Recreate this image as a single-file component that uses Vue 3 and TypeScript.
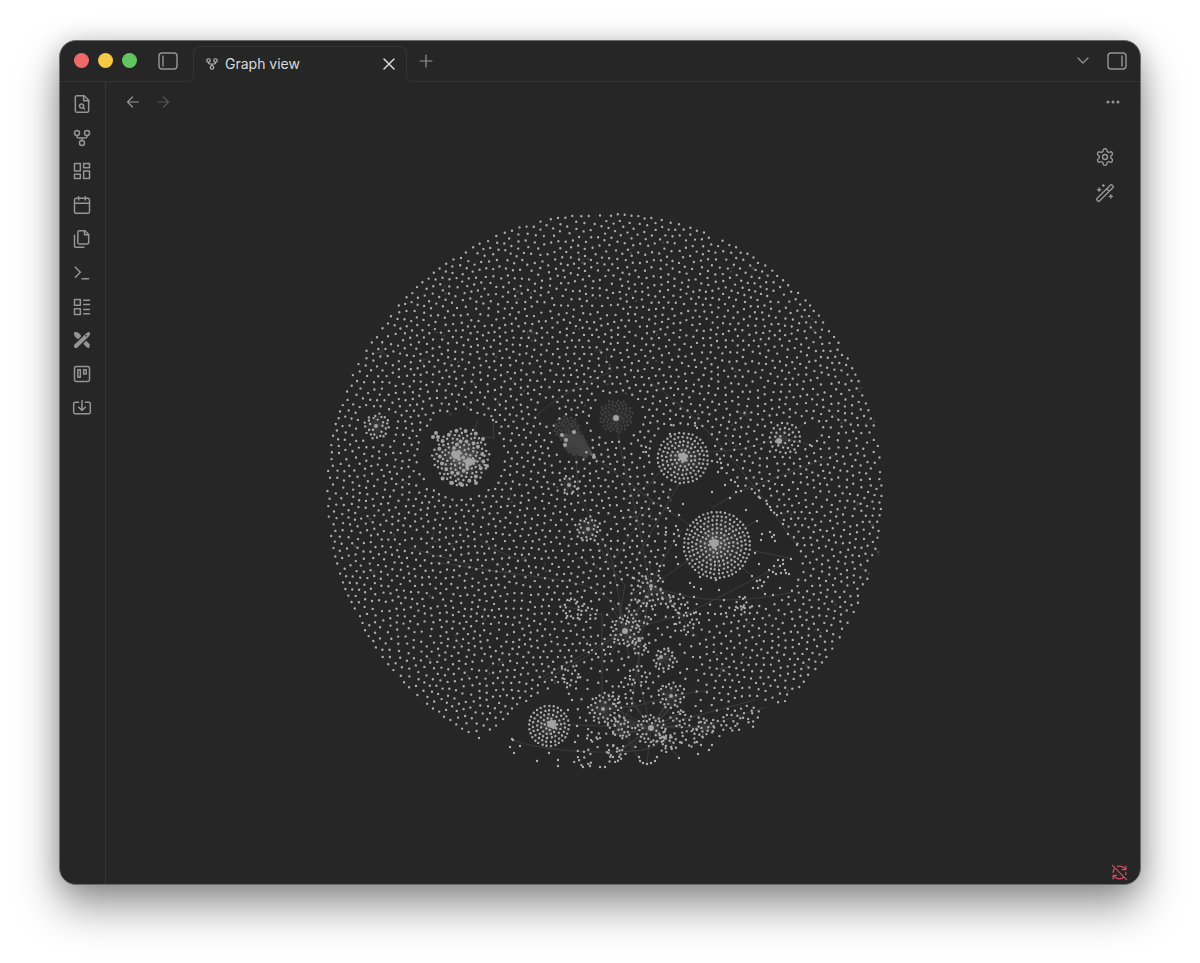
<script setup lang="ts">
type Point = [number, number]

interface Hub {
  x: number
  y: number
  r: number
}

interface Cluster {
  x: number
  y: number
  radius: number
  count: number
}

interface RibbonItem {
  label: string
  paths: string[]
  solid?: boolean
}

const forkIcon = [
  'M15 18a3 3 0 1 1-6 0 3 3 0 0 1 6 0M9 6a3 3 0 1 1-6 0 3 3 0 0 1 6 0M21 6a3 3 0 1 1-6 0 3 3 0 0 1 6 0',
  'M18 9v1a2 2 0 0 1-2 2H8a2 2 0 0 1-2-2V9M12 12v3',
]

const ribbon: RibbonItem[] = [
  {
    label: 'Open quick switcher',
    paths: [
      'M14.5 2H6a2 2 0 0 0-2 2v16a2 2 0 0 0 2 2h12a2 2 0 0 0 2-2V7.500z',
      'M14 2v6h6M14 14.500a2.500 2.500 0 1 1-5 0 2.500 2.500 0 0 1 5 0M13.250 16.250 15 18',
    ],
  },
  { label: 'Open graph view', paths: forkIcon },
  { label: 'Create new canvas', paths: ['M3 3h7v9H3zM14 3h7v5h-7zM14 12h7v9h-7zM3 16h7v5H3z'] },
  {
    label: "Open today's daily note",
    paths: ['M5 4h14a2 2 0 0 1 2 2v14a2 2 0 0 1-2 2H5a2 2 0 0 1-2-2V6a2 2 0 0 1 2-2z', 'M16 2v4M8 2v4M3 10h18'],
  },
  {
    label: 'Insert template',
    paths: [
      'M15.5 2H8.600c-.4 0-.8.2-1.100.5-.3.3-.5.7-.5 1.100v12.800c0 .4.2.8.5 1.100.3.3.7.5 1.100.5h9.800c.4 0 .8-.2 1.100-.5.3-.3.5-.7.5-1.100V6.500z',
      'M3 7.600v12.800c0 .4.2.8.5 1.100.3.3.7.5 1.100.5h9.800M15 2v5h5',
    ],
  },
  { label: 'Open command palette', paths: ['M4 17l6-6-6-6M12 19h8'] },
  { label: 'Open list layout', paths: ['M3 3h7v7H3zM3 14h7v7H3z', 'M14 4h7M14 9h7M14 15h7M14 20h7'] },
  {
    label: 'New drawing',
    solid: true,
    paths: [
      'M3 17.500 16 5c2-2 4-2.500 5.500-2 .5 1.500 0 3.500-2 5.500L6.500 21c-1 1-2.500 1-3.500 0s-1-2.500 0-3.500z',
      'M2.500 2.500C7 2 10 4 11 7.500L7.500 11C4 9.500 2 7 2.500 2.500z',
      'M13.500 16.500 17 13l4.500 4.500-1 4.500-2.500-1z',
    ],
  },
  {
    label: 'Create new board',
    paths: ['M5 3h14a2 2 0 0 1 2 2v14a2 2 0 0 1-2 2H5a2 2 0 0 1-2-2V5a2 2 0 0 1 2-2z', 'M7 7h3v9H7zM14 7h3v5h-3z'],
  },
  {
    label: 'Open importer',
    paths: ['M12 3v12M8 11l4 4 4-4', 'M8 5H4a2 2 0 0 0-2 2v10a2 2 0 0 0 2 2h16a2 2 0 0 0 2-2V7a2 2 0 0 0-2-2h-4'],
  },
]

let seed = 20231
function random(): number {
  seed = (seed + 0x6d2b79f5) | 0
  let t = Math.imul(seed ^ (seed >>> 15), 1 | seed)
  t = (t + Math.imul(t ^ (t >>> 7), 61 | t)) ^ t
  return ((t ^ (t >>> 14)) >>> 0) / 4294967296
}

const centre = { x: 604.5, y: 491, r: 278 }

const roundGaps: [number, number, number, number][] = [
  [461, 455, 44, 45],
  [377, 426, 20, 20],
  [616, 417, 26, 25],
  [571, 438, 19, 24],
  [548, 412, 12, 12],
  [683, 457, 34, 33],
  [784, 437, 20, 19],
  [803, 433, 16, 15],
  [588, 529, 18, 18],
  [569, 486, 8, 8],
  [549, 726, 32, 30],
]

const gapUpper: Point[] = [
  [672, 486], [712, 466], [732, 476], [756, 494], [778, 517], [797, 545], [801, 568],
  [797, 585], [783, 598], [765, 606], [715, 606], [672, 592], [660, 578], [670, 545], [668, 505],
]
const gapLower: Point[] = [
  [480, 733], [500, 726], [517, 706], [535, 696], [552, 686], [552, 664], [582, 652], [592, 640],
  [590, 622], [560, 614], [562, 604], [602, 604], [618, 585], [650, 575], [676, 590], [712, 604],
  [728, 612], [706, 635], [699, 660], [706, 692], [724, 702], [752, 700], [782, 704], [770, 790], [480, 790],
]

function inside(shape: Point[], x: number, y: number): boolean {
  let hit = false
  for (let i = 0, j = shape.length - 1; i < shape.length; j = i++) {
    const [xi, yi] = shape[i]
    const [xj, yj] = shape[j]
    if (yi > y !== yj > y && x < ((xj - xi) * (y - yi)) / (yj - yi) + xi) hit = !hit
  }
  return hit
}

function blocked(x: number, y: number): boolean {
  if (Math.hypot(x - centre.x, y - centre.y) > centre.r) return true
  if (roundGaps.some(([cx, cy, a, b]) => ((x - cx) / a) ** 2 + ((y - cy) / b) ** 2 < 1)) return true
  return inside(gapUpper, x, y) || inside(gapLower, x, y)
}

/* Buckets points by cell so that neighbour lookups stay cheap. */
class Buckets {
  private cells = new Map<number, number[]>()
  add(i: number, x: number, y: number) {
    const k = Math.floor(x / 8) * 1000 + Math.floor(y / 8)
    const cell = this.cells.get(k)
    if (cell) cell.push(i)
    else this.cells.set(k, [i])
  }
  near(x: number, y: number): number[] {
    const cx = Math.floor(x / 8)
    const cy = Math.floor(y / 8)
    const found: number[] = []
    for (let a = -1; a <= 1; a++)
      for (let b = -1; b <= 1; b++) {
        const cell = this.cells.get((cx + a) * 1000 + cy + b)
        if (cell) found.push(...cell)
      }
    return found
  }
}

function scatter(): Point[] {
  const points: Point[] = []
  const buckets = new Buckets()
  const put = (x: number, y: number, gap: number) => {
    if (buckets.near(x, y).some((i) => Math.hypot(points[i][0] - x, points[i][1] - y) < gap)) return
    buckets.add(points.length, x, y)
    points.push([x, y])
  }
  for (let n = 0; n < 90000; n++) {
    const x = centre.x + (random() * 2 - 1) * centre.r
    const y = centre.y + (random() * 2 - 1) * centre.r
    if (!blocked(x, y)) put(x, y, 5.7)
  }
  for (let step = 0; step < 8; step++) {
    const grid = new Buckets()
    points.forEach(([x, y], i) => grid.add(i, x, y))
    points.forEach((p, i) => {
      let dx = 0
      let dy = 0
      for (const j of grid.near(p[0], p[1])) {
        if (j === i) continue
        const ex = p[0] - points[j][0]
        const ey = p[1] - points[j][1]
        const d = Math.hypot(ex, ey) || 1
        if (d < 7.4) {
          dx += (ex / d) * (7.4 - d) * 0.22
          dy += (ey / d) * (7.4 - d) * 0.22
        }
      }
      let x = p[0] + dx
      let y = p[1] + dy
      const out = Math.hypot(x - centre.x, y - centre.y)
      if (out > centre.r - 1) {
        x = centre.x + ((x - centre.x) / out) * (centre.r - 1)
        y = centre.y + ((y - centre.y) / out) * (centre.r - 1)
      }
      if (!blocked(x, y)) points[i] = [x, y]
    })
  }
  return points
}

function bloom({ x, y, radius, count }: Cluster, wobble = 0.5, core = 0): Point[] {
  return Array.from({ length: count }, (_, i): Point => {
    const d = core + (radius - core) * Math.sqrt((i + 0.5) / count)
    const a = i * 2.39996
    return [
      x + Math.cos(a) * d + (random() - 0.5) * wobble,
      y + Math.sin(a) * d + (random() - 0.5) * wobble,
    ]
  })
}

function rings(x: number, y: number, radius: number, gap: number): Point[] {
  const list: Point[] = []
  const turns = Math.round(radius / gap)
  for (let k = 1; k <= turns; k++) {
    const d = (radius * k) / turns
    const n = Math.round((6.283 * d) / (gap * 1.08))
    const start = random() * 6.283
    for (let i = 0; i < n; i++) {
      const a = start + (i / n) * 6.283
      list.push([x + Math.cos(a) * d + random() * 0.8 - 0.4, y + Math.sin(a) * d + random() * 0.8 - 0.4])
    }
  }
  return list
}

const field = scatter()

const denseDots: Point[] = [
  ...rings(683, 458, 25, 4.1),
  ...rings(717, 545, 33, 4.1),
  ...rings(549, 726, 20, 4),
  ...rings(785, 438, 15, 4.6),
]

const ringClusters: Cluster[] = [
  { x: 377, y: 426, radius: 13, count: 28 },
  { x: 588, y: 529, radius: 13, count: 28 },
  { x: 625, y: 631, radius: 16, count: 38 },
  { x: 605, y: 709, radius: 17, count: 40 },
  { x: 651, y: 730, radius: 16, count: 42 },
  { x: 665, y: 660, radius: 12, count: 24 },
  { x: 671, y: 695, radius: 14, count: 28 },
  { x: 569, y: 486, radius: 9, count: 9 },
]

const looseClusters: Cluster[] = [
  { x: 621, y: 728, radius: 12, count: 26 },
  { x: 638, y: 676, radius: 12, count: 18 },
  { x: 640, y: 646, radius: 10, count: 18 },
  { x: 686, y: 622, radius: 14, count: 26 },
  { x: 677, y: 603, radius: 10, count: 14 },
  { x: 668, y: 742, radius: 11, count: 22 },
  { x: 681, y: 718, radius: 10, count: 18 },
  { x: 705, y: 727, radius: 11, count: 22 },
  { x: 690, y: 738, radius: 11, count: 14 },
  { x: 731, y: 721, radius: 12, count: 18 },
  { x: 751, y: 715, radius: 11, count: 13 },
  { x: 615, y: 753, radius: 10, count: 22 },
  { x: 593, y: 736, radius: 8, count: 10 },
  { x: 583, y: 758, radius: 10, count: 11 },
  { x: 569, y: 675, radius: 14, count: 26 },
  { x: 622, y: 694, radius: 14, count: 18 },
  { x: 600, y: 650, radius: 13, count: 16 },
  { x: 574, y: 609, radius: 12, count: 18 },
  { x: 592, y: 613, radius: 8, count: 8 },
  { x: 648, y: 590, radius: 18, count: 34 },
  { x: 641, y: 612, radius: 16, count: 26 },
  { x: 742, y: 604, radius: 8, count: 12 },
  { x: 668, y: 600, radius: 9, count: 10 },
]

const singles: Point[] = [
  [712, 492], [683, 504], [679, 515], [746, 510], [757, 521], [762, 534], [770, 532], [772, 537],
  [775, 541], [774, 535], [761, 540], [755, 553], [759, 564], [769, 570], [768, 577], [773, 572],
  [778, 560], [783, 560], [780, 566], [783, 564], [791, 559], [785, 570], [786, 573], [789, 574],
  [774, 566], [776, 574], [781, 573], [752, 576], [757, 581], [753, 588], [758, 588], [760, 580],
  [764, 582], [762, 586], [765, 594], [773, 595], [780, 588], [716, 580], [719, 590], [690, 583],
  [694, 587], [701, 589], [700, 577], [724, 600], [694, 597], [676, 557], [678, 564], [660, 566],
  [676, 545], [674, 534], [679, 536], [666, 532], [676, 526], [670, 511], [678, 530], [674, 541],
  [670, 434], [671, 425], [646, 447], [646, 452], [697, 428], [695, 423], [718, 472], [712, 461],
  [720, 459], [721, 463], [722, 468], [725, 485], [731, 480], [735, 482], [738, 486], [741, 491],
  [736, 492], [730, 498], [755, 493], [760, 498], [767, 504], [771, 510], [777, 515], [783, 524],
  [788, 534], [797, 545], [805, 423], [810, 445], [493, 420], [473, 430],
  [513, 740], [510, 747], [514, 753], [520, 746], [549, 753], [537, 761], [558, 766], [558, 760],
  [512, 739], [577, 726], [568, 710], [572, 700], [575, 742], [600, 767], [605, 767], [590, 766],
  [583, 767], [639, 757], [640, 761], [643, 763], [647, 764], [651, 763], [655, 761], [657, 757],
  [679, 758], [698, 754], [709, 750], [712, 745], [701, 745], [708, 613], [700, 614], [694, 613],
  [715, 614], [721, 614], [726, 613], [735, 610],
]

const dots: Point[] = [
  ...field,
  ...denseDots,
  ...ringClusters.flatMap((c) => bloom(c, 1.4, 4)),
  ...looseClusters.flatMap((c) => bloom(c, 3.6, 1)),
  ...singles,
]

/* Loose notes that drift between the small clusters at the foot of the graph. */
const taken = new Buckets()
dots.forEach(([x, y], i) => taken.add(i, x, y))
for (let n = 0; n < 1500; n++) {
  const x = 560 + random() * 160
  const y = 600 + random() * 150
  if (!inside(gapLower, x, y)) continue
  if (Math.hypot(x - 549, y - 726) < 30) continue
  if (taken.near(x, y).some((i) => Math.hypot(dots[i][0] - x, dots[i][1] - y) < 6.8)) continue
  taken.add(dots.length, x, y)
  dots.push([x, y])
}

const mainCluster = bloom({ x: 461, y: 457, radius: 29, count: 130 }, 1.2)
const mainLarge = mainCluster.filter((_, i) => i % 4 === 0)

const dimDots: Point[] = [
  ...bloom({ x: 616, y: 416, radius: 17, count: 70 }, 0.6, 3),
  ...bloom({ x: 567, y: 429, radius: 13, count: 55 }, 0.8),
  ...bloom({ x: 575, y: 444, radius: 11, count: 75 }, 0.6),
  ...bloom({ x: 584, y: 452, radius: 6, count: 26 }, 0.5),
  ...field.filter((_, i) => i % 43 === 0).map(([x, y]): Point => [x + 3, y + 3]),
]

const hubs: Hub[] = [
  { x: 456, y: 455, r: 4 }, { x: 453, y: 454, r: 2 }, { x: 459, y: 459, r: 2 }, { x: 459, y: 452, r: 2 },
  { x: 469, y: 462, r: 4 }, { x: 474, y: 461, r: 2 }, { x: 467, y: 466, r: 2 },
  { x: 436, y: 433, r: 2 }, { x: 438, y: 437, r: 2 }, { x: 433, y: 437, r: 2 },
  { x: 487, y: 466, r: 2 }, { x: 462, y: 485, r: 2 }, { x: 476, y: 483, r: 2 }, { x: 452, y: 483, r: 2 },
  { x: 376, y: 426, r: 2 }, { x: 616, y: 418, r: 3 }, { x: 562, y: 435, r: 2 }, { x: 574, y: 432, r: 2 },
  { x: 566, y: 440, r: 2 }, { x: 565, y: 445, r: 2 }, { x: 594, y: 457, r: 2 },
  { x: 683, y: 457, r: 4 }, { x: 680, y: 455, r: 2 }, { x: 686, y: 456, r: 2 }, { x: 684, y: 460, r: 2 },
  { x: 714, y: 543, r: 4 }, { x: 717, y: 544, r: 2 }, { x: 711, y: 542, r: 2 }, { x: 714, y: 547, r: 2 },
  { x: 779, y: 441, r: 3 }, { x: 588, y: 529, r: 2 }, { x: 569, y: 485, r: 2 },
  { x: 625, y: 631, r: 3 }, { x: 603, y: 709, r: 2 }, { x: 651, y: 728, r: 3 },
  { x: 552, y: 724, r: 4 }, { x: 549, y: 725, r: 2 }, { x: 554, y: 727, r: 2 },
  { x: 661, y: 657, r: 2 }, { x: 671, y: 696, r: 2 }, { x: 651, y: 586, r: 2 }, { x: 665, y: 738, r: 2 },
]

const toDots = (list: Point[]) => list.map(([x, y]) => `M${x.toFixed(1)} ${y.toFixed(1)}h0`).join('')

const spokes = (x: number, y: number, list: Point[]) =>
  list.map(([a, b]) => `M${x} ${y}L${a.toFixed(1)} ${b.toFixed(1)}`).join('')

const dotPath = toDots([...dots, ...mainCluster])
const largePath = toDots(mainLarge)
const dimPath = toDots(dimDots)

const around = (x: number, y: number, r: number, every = 1) =>
  dots.filter(([a, b], i) => i % every === 0 && Math.hypot(a - x, b - y) < r)

const strongSpokes =
  spokes(683, 457, around(683, 457, 26)) +
  spokes(714, 543, around(717, 545, 34)) +
  spokes(552, 724, around(549, 726, 21)) +
  spokes(779, 441, around(784, 438, 16)) +
  spokes(456, 455, mainCluster) +
  spokes(469, 462, mainCluster)

const faintSpokes =
  spokes(616, 418, dimDots.slice(0, 70)) +
  spokes(594, 457, dimDots.slice(70, 125)) +
  spokes(562, 435, dimDots.slice(125, 200))

const linkPath =
  spokes(588, 529, around(588, 529, 15)) +
  spokes(625, 631, around(625, 631, 32, 2)) +
  spokes(603, 709, around(603, 709, 17)) +
  spokes(651, 728, around(651, 730, 40, 4)) +
  spokes(671, 696, around(671, 696, 14)) +
  spokes(661, 657, around(665, 660, 12)) +
  spokes(620, 726, around(621, 726, 11)) +
  spokes(651, 586, around(651, 586, 30, 3)) +
  spokes(376, 426, around(376, 426, 14)) +
  spokes(569, 485, around(569, 485, 11)) +
  spokes(638, 517, around(638, 517, 16, 2)) +
  spokes(382, 352, around(382, 352, 11)) +
  spokes(532, 332, around(532, 332, 10)) +
  spokes(722, 669, around(722, 669, 10)) +
  spokes(745, 415, around(745, 415, 10)) +
  spokes(704, 727, around(704, 727, 11)) +
  field
    .filter((_, i) => i % 43 === 0)
    .map(([x, y]) => `M${x.toFixed(1)} ${y.toFixed(1)}l${((random() - 0.5) * 14).toFixed(1)} ${((random() - 0.5) * 14).toFixed(1)}`)
    .join('')

const longLinks = [
  'M512 740Q550 753 615 752T651 728',
  'M552 724L651 728L704 727L766 707',
  'M541 678L625 631M545 680L594 652L625 631',
  'M602 613V709M560 605L602 615',
  'M616 418C619 450 628 480 636 512S643 560 651 586',
  'M576 455L578 492Q592 520 612 560L625 631',
  'M588 529L612 568L625 585',
  'M594 457L630 483L651 500M640 492L690 525',
  'M537 415Q560 393 612 371',
  'M650 382Q690 410 720 445T767 504T797 545',
  'M712 508L740 491L790 472L835 455',
  'M700 453L742 449L785 437',
  'M651 586L714 543L790 558',
  'M651 586Q690 600 724 600T793 592',
  'M625 631L690 612L780 566',
  'M660 566L674 541L682 530M635 560L683 477L700 458',
  'M625 500L651 483L668 460M614 560L642 518L652 500',
  'M651 586L625 631M651 586L640 646L638 676L651 728',
  'M625 585L618 625M640 646L632 704L620 726',
  'M671 696L636 706L603 709M671 696L651 728L620 726',
  'M435 562Q500 572 560 580T625 631M410 548L470 565',
  'M480 540L500 552L520 560',
  'M671 696L710 690M651 728L710 712L755 700',
  'M665 595L697 637M620 700L630 744L640 760',
  'M714 543L752 576L765 594M714 543L757 521',
  'M493 420L494 438L483 437M478 421L474 430',
  'M784 438L805 423M784 438L810 445',
].join('')
</script>

<template>
  <div class="desktop">
    <main class="window">
      <header class="titlebar">
        <div class="lights">
          <button class="light close" aria-label="Close window"></button>
          <button class="light minimise" aria-label="Minimise window"></button>
          <button class="light zoom" aria-label="Zoom window"></button>
        </div>
        <button class="icon-button left-toggle" aria-label="Toggle left sidebar">
          <svg class="panel" viewBox="0 0 20 18"><rect x="1" y="1" width="18" height="16" rx="3" /><path d="M5 4v10" /></svg>
        </button>
        <div class="tab">
          <svg class="flare flare-left" viewBox="0 0 8 8"><path d="M0 7.500Q7.500 7.500 7.500 0" /></svg>
          <svg class="tab-icon" viewBox="0 0 24 24"><path v-for="d in forkIcon" :key="d" :d="d" /></svg>
          <span class="tab-title">Graph view</span>
          <button class="icon-button tab-close" aria-label="Close tab">
            <svg viewBox="0 0 12 12"><path d="M1 1l10 10M11 1L1 11" /></svg>
          </button>
          <svg class="flare flare-right" viewBox="0 0 8 8"><path d="M8 7.500Q.5 7.500 .5 0" /></svg>
        </div>
        <button class="icon-button new-tab" aria-label="New tab">
          <svg viewBox="0 0 14 14"><path d="M7 1v12M1 7h12" /></svg>
        </button>
        <div class="title-actions">
          <button class="icon-button" aria-label="Tab list">
            <svg class="chevron" viewBox="0 0 12 8"><path d="M1 1l5 5 5-5" /></svg>
          </button>
          <button class="icon-button" aria-label="Toggle right sidebar">
            <svg class="panel" viewBox="0 0 20 18"><rect x="1" y="1" width="18" height="16" rx="3" /><path d="M15 4v10" /></svg>
          </button>
        </div>
      </header>

      <div class="body">
        <nav class="ribbon" aria-label="Ribbon">
          <div class="ribbon-items">
            <button v-for="item in ribbon" :key="item.label" class="icon-button" :aria-label="item.label">
              <svg class="ribbon-icon" :class="{ solid: item.solid }" viewBox="0 0 24 24">
                <path v-for="d in item.paths" :key="d" :d="d" />
                <circle v-if="item.solid" class="hole" cx="17" cy="7" r="1" />
              </svg>
            </button>
          </div>
        </nav>

        <section class="view" aria-label="Graph view">
          <svg class="graph" viewBox="106 82 1034 802" role="img" aria-label="Graph of linked notes">
            <path class="spokes" :d="strongSpokes" />
            <path class="spokes faint" :d="faintSpokes" />
            <path class="links" :d="linkPath" />
            <path class="links" :d="longLinks" />
            <path class="dots dim" :d="dimPath" />
            <path class="dots" :d="dotPath" />
            <path class="dots large" :d="largePath" />
            <circle v-for="(h, i) in hubs" :key="i" class="hub" :cx="h.x" :cy="h.y" :r="h.r" />
          </svg>

          <div class="view-header">
            <button class="icon-button" aria-label="Back">
              <svg class="arrow" viewBox="0 0 14 14"><path d="M12.500 7h-11M6.500 2L1.500 7l5 5" /></svg>
            </button>
            <button class="icon-button" aria-label="Forward" disabled>
              <svg class="arrow" viewBox="0 0 14 14"><path d="M1.500 7h11M7.500 2l5 5-5 5" /></svg>
            </button>
            <button class="icon-button more" aria-label="More options">
              <svg viewBox="0 0 14 4"><circle cx="2" cy="2" r="1.500" /><circle cx="7" cy="2" r="1.500" /><circle cx="12" cy="2" r="1.500" /></svg>
            </button>
          </div>

          <div class="graph-controls">
            <button class="icon-button" aria-label="Open graph settings">
              <svg viewBox="0 0 24 24">
                <path d="M12.220 2h-.44a2 2 0 0 0-2 2v.18a2 2 0 0 1-1 1.730l-.43.25a2 2 0 0 1-2 0l-.15-.08a2 2 0 0 0-2.730.73l-.22.38a2 2 0 0 0 .73 2.730l.15.1a2 2 0 0 1 1 1.720v.51a2 2 0 0 1-1 1.740l-.15.09a2 2 0 0 0-.73 2.730l.22.38a2 2 0 0 0 2.730.73l.15-.08a2 2 0 0 1 2 0l.43.25a2 2 0 0 1 1 1.730V20a2 2 0 0 0 2 2h.44a2 2 0 0 0 2-2v-.18a2 2 0 0 1 1-1.730l.43-.25a2 2 0 0 1 2 0l.15.08a2 2 0 0 0 2.730-.73l.22-.39a2 2 0 0 0-.73-2.730l-.15-.08a2 2 0 0 1-1-1.740v-.5a2 2 0 0 1 1-1.740l.15-.09a2 2 0 0 0 .73-2.730l-.22-.38a2 2 0 0 0-2.730-.73l-.15.08a2 2 0 0 1-2 0l-.43-.25a2 2 0 0 1-1-1.730V4a2 2 0 0 0-2-2z" />
                <circle cx="12" cy="12" r="3" />
              </svg>
            </button>
            <button class="icon-button" aria-label="Start timelapse animation">
              <svg viewBox="0 0 24 24">
                <path d="M21.640 3.640l-1.280-1.280a1.210 1.210 0 0 0-1.720 0L2.360 18.640a1.210 1.210 0 0 0 0 1.720l1.280 1.280a1.200 1.200 0 0 0 1.720 0L21.640 5.360a1.200 1.200 0 0 0 0-1.720M14 7l3 3M5 6v4M19 14v4M10 2v2M7 8H3M21 16h-4M11 3H9" />
              </svg>
            </button>
          </div>

          <button class="icon-button sync" aria-label="Sync is off">
            <svg viewBox="0 0 24 24">
              <path d="M21 8l-2.260-2.260A9.750 9.750 0 0 0 12 3c-1 0-1.970.16-2.870.47M8 16H3v5M3 12c0-2.490 1-4.740 2.640-6.360M3 16l2.260 2.260A9.750 9.750 0 0 0 12 21c2.490 0 4.740-1 6.360-2.640M21 12c0 1-.16 1.970-.47 2.870M21 3v5h-5M22 22L2 2" />
            </svg>
          </button>
        </section>
      </div>
    </main>
  </div>
</template>

<style>
html,
body {
  margin: 0;
  background: #fff;
}
</style>

<style scoped>
.desktop {
  box-sizing: border-box;
  display: flex;
  min-height: 100vh;
  padding: 40px 59px 78px;
  overflow: hidden;
  background: #fff;
  font-family: Inter, "Liberation Sans", sans-serif;
}

.window {
  display: flex;
  flex: 1;
  flex-direction: column;
  min-width: 0;
  overflow: hidden;
  border: 1px solid #6b6b6b;
  border-radius: 17px;
  background: #262626;
  box-shadow: 0 22px 44px rgba(0, 0, 0, 0.4), 0 2px 24px rgba(0, 0, 0, 0.18);
}

svg {
  display: block;
  fill: none;
  stroke: currentColor;
  stroke-linecap: round;
  stroke-linejoin: round;
}

.icon-button {
  display: flex;
  align-items: center;
  justify-content: center;
  margin: 0;
  padding: 0;
  border: 0;
  background: none;
  color: #959595;
}

.titlebar {
  display: flex;
  flex: none;
  box-sizing: border-box;
  height: 41px;
  border-bottom: 1px solid #363636;
}

.lights {
  display: flex;
  gap: 9px;
  padding: 12px 0 0 14px;
}

.light {
  width: 15px;
  height: 15px;
  padding: 0;
  border: 0;
  border-radius: 50%;
}

.close {
  background: #ee6a69;
}

.minimise {
  background: #f5c944;
}

.zoom {
  background: #61c662;
}

.left-toggle {
  width: 20px;
  margin-left: 21px;
}

.panel {
  width: 20px;
  height: 18px;
  stroke-width: 1.4;
}

.tab {
  position: relative;
  display: flex;
  box-sizing: border-box;
  align-items: center;
  width: 214px;
  height: 36px;
  margin: 5px 0 -1px 15px;
  padding: 0 11px 1px;
  border: 1px solid #363636;
  border-bottom: 0;
  border-radius: 8px 8px 0 0;
  background: #262626;
  color: #dadada;
}

.flare {
  position: absolute;
  bottom: 0;
  width: 8px;
  height: 8px;
  background: #262626;
  stroke: #363636;
}

.flare-left {
  left: -8px;
}

.flare-right {
  right: -8px;
}

.tab-icon {
  width: 14px;
  height: 14px;
  stroke-width: 2;
  color: #b8b8b8;
}

.tab-title {
  flex: 1;
  margin-left: 6px;
  font-size: 14px;
  line-height: 20px;
}

.tab-close {
  color: #dadada;
}

.tab-close svg {
  width: 12px;
  height: 12px;
  stroke-width: 1.5;
}

.new-tab {
  width: 38px;
}

.new-tab svg {
  width: 14px;
  height: 14px;
  stroke-width: 1.2;
}

.title-actions {
  display: flex;
  gap: 18px;
  margin-left: auto;
  padding-right: 13px;
}

.chevron {
  width: 12px;
  height: 8px;
  stroke-width: 1.3;
}

.body {
  display: flex;
  flex: 1;
  min-height: 0;
}

.ribbon {
  box-sizing: border-box;
  flex: none;
  width: 46px;
  padding: 5px 1px 0 0;
  border-right: 1px solid #363636;
}

.ribbon-items {
  display: grid;
  height: 338px;
  grid-auto-rows: 1fr;
}

.ribbon-icon {
  width: 20px;
  height: 20px;
  stroke-width: 1.8;
}

.solid {
  fill: currentColor;
  stroke: none;
}

.hole {
  fill: #262626;
}

.view {
  position: relative;
  flex: 1;
  min-width: 0;
}

.graph {
  position: absolute;
  inset: 0;
  width: 100%;
  height: 100%;
}

.dots {
  stroke: #adadad;
  stroke-width: 2.4;
}

.dim {
  stroke: #424242;
}

.large {
  stroke: #a2a2a2;
  stroke-width: 4;
}

.spokes {
  stroke: #6f6f6f;
  stroke-opacity: 0.18;
}

.faint {
  stroke-opacity: 0.1;
}

.links {
  stroke: #3c3c3c;
  stroke-width: 1;
}

.hub {
  fill: #a2a2a2;
  stroke: none;
}

.view-header {
  position: relative;
  display: flex;
  height: 40px;
  gap: 16px;
  padding: 0 20px;
}

.arrow {
  width: 14px;
  height: 14px;
  stroke-width: 1.2;
}

.icon-button:disabled {
  color: #555;
}

.more {
  margin-left: auto;
}

.more svg {
  width: 14px;
  height: 4px;
  fill: currentColor;
  stroke: none;
}

.graph-controls {
  position: absolute;
  top: 65px;
  right: 25px;
  display: grid;
  gap: 16px;
}

.graph-controls svg {
  width: 20px;
  height: 20px;
  stroke-width: 1.7;
}

.sync {
  position: absolute;
  right: 12px;
  bottom: 3px;
  color: #d9485c;
}

.sync svg {
  width: 17px;
  height: 17px;
  stroke-width: 1.8;
}
</style>
